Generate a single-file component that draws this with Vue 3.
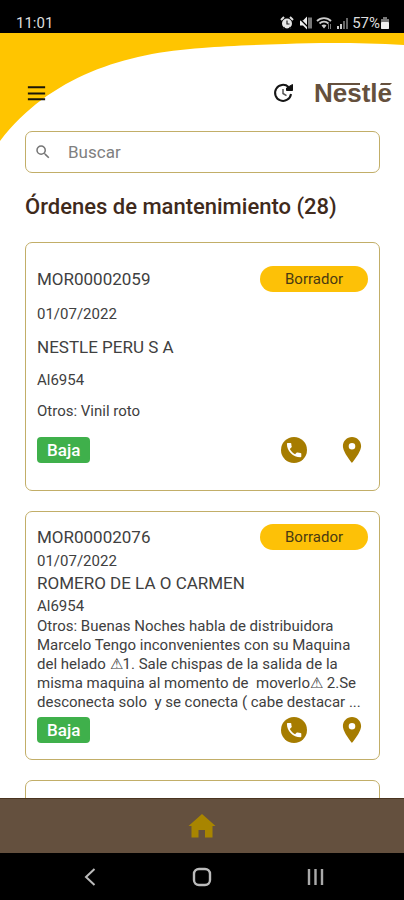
<script setup>
import { ref } from 'vue'

const query = ref('')
const total = 28

const orders = [
  {
    id: 'MOR00002059',
    date: '01/07/2022',
    client: 'NESTLE PERU S A',
    code: 'Al6954',
    detail: 'Otros: Vinil roto',
    status: 'Borrador',
    priority: 'Baja',
  },
  {
    id: 'MOR00002076',
    date: '01/07/2022',
    client: 'ROMERO DE LA O CARMEN',
    code: 'Al6954',
    detail:
      'Otros: Buenas Noches habla de distribuidora Marcelo Tengo inconvenientes con su Maquina del helado ⚠1. Sale chispas de la salida de la misma maquina al momento de  moverlo⚠ 2.Se desconecta solo  y se conecta ( cabe destacar ...',
    status: 'Borrador',
    priority: 'Baja',
  },
]
</script>

<template>
  <div class="screen">
    <div class="status-bar">
      <span class="clock">11:01</span>
      <div class="indicators">
        <svg class="ind" viewBox="0 0 14 14" aria-hidden="true">
          <path d="M1 4 4 1M13 4 10 1" stroke="#ddd" stroke-width="2" />
          <circle cx="7" cy="7.500" r="5" fill="#e6e6e6" />
          <path d="M7 4.500V8H9.500M3 13l1.500-2M11 13 9.500 11" stroke="#222" stroke-width="1.200" fill="none" />
        </svg>
        <svg class="ind" viewBox="0 0 14 14" aria-hidden="true">
          <path d="M2 4.500h3l4-4v13L5 9.500H2z" fill="#eee" />
          <path d="M1 2l11 11" stroke="#000" stroke-width="1.200" />
          <path d="M11 1.500v11M13 1.500v11" stroke="#aaa" stroke-width="1.400" />
        </svg>
        <svg class="ind wide" viewBox="0 0 16 14" aria-hidden="true">
          <path d="M1 5a10 10 0 0 1 14 0M3.500 7.500a6.500 6.500 0 0 1 9 0" stroke="#ccc" stroke-width="1.800" fill="none" />
          <path d="M5.500 9.500a4 4 0 0 1 5 0L8 12.500z" fill="#ccc" />
          <path d="M12.500 8v5M14.500 8v5" stroke="#777" />
        </svg>
        <svg class="ind signal" viewBox="0 0 12 14" aria-hidden="true">
          <path d="M2 10v3M5 8v5" stroke="#ccc" stroke-width="2" />
          <path d="M8 5v8M11 2v11" stroke="#666" stroke-width="2" />
        </svg>
        <span class="percent">57%</span>
        <svg class="battery" viewBox="0 0 10 14" aria-hidden="true">
          <path d="M3 1h4v2h2v10H1V3h2z" fill="#777" />
          <rect x="1" y="6" width="8" height="7" rx="1" fill="#eee" />
        </svg>
      </div>
    </div>

    <main class="content">
      <svg class="swoosh" viewBox="0 0 404 108" preserveAspectRatio="none" aria-hidden="true">
        <path d="M0 0H404V12C360 9.500 320 9.500 285 11C250 12 225 13 202 15C125 20 50 43 0 108Z" fill="#ffc500" />
      </svg>

      <header class="top">
        <button class="icon-btn" type="button" aria-label="Menú">
          <svg class="menu-icon" viewBox="0 0 24 24">
            <path d="M3 5.500h18M3 12h18M3 18h18" stroke="#1b1608" stroke-width="2.200" />
          </svg>
        </button>
        <div class="top-right">
          <button class="icon-btn" type="button" aria-label="Actualizar">
            <svg class="update-icon" viewBox="0 0 24 24">
              <path d="M17.500 6A8 8 0 1 0 20 13" stroke="#161616" stroke-width="2" fill="none" />
              <path d="M21.500 3.500V9.500H15.500V7z" fill="#111" stroke="#111" stroke-width="1" stroke-linejoin="round" />
              <path d="M12 8v4.500l3.500 2.200" stroke="#555" stroke-width="1.500" fill="none" />
            </svg>
          </button>
          <svg class="logo" viewBox="0 0 84 28" role="img" aria-label="Nestlé">
            <text x="1" y="23" class="logo-text">Nestle</text>
            <path d="M15 4H47V6H15zM68 4H79L77 6H67z" fill="#65503d" />
          </svg>
        </div>
      </header>

      <label class="search">
        <svg class="search-icon" viewBox="0 0 24 24" aria-hidden="true">
          <path
            d="M15.500 14h-.79l-.28-.27A6.470 6.470 0 0 0 16 9.500 6.500 6.500 0 1 0 9.500 16c1.610 0 3.090-.59 4.230-1.570l.27.28v.79l5 4.990L20.490 19l-4.990-5zm-6 0C7.010 14 5 11.990 5 9.500S7.010 5 9.500 5 14 7.010 14 9.500 11.990 14 9.500 14z"
            fill="#757575"
          />
        </svg>
        <input v-model="query" class="search-input" type="text" placeholder="Buscar" aria-label="Buscar" />
      </label>

      <h1 class="title">Órdenes de mantenimiento ({{ total }})</h1>

      <div class="list">
        <article v-for="order in orders" :key="order.id" class="card">
          <div class="row">
            <span class="strong">{{ order.id }}</span>
            <span class="pill">{{ order.status }}</span>
          </div>
          <p class="small">{{ order.date }}</p>
          <p class="strong">{{ order.client }}</p>
          <p class="small">{{ order.code }}</p>
          <p class="detail">{{ order.detail }}</p>
          <div class="row foot">
            <span class="tag">{{ order.priority }}</span>
            <div class="actions">
              <button class="icon-btn" type="button" aria-label="Llamar">
                <svg class="action-icon" viewBox="0 0 26 26">
                  <circle cx="13" cy="13" r="13" fill="#a67c00" />
                  <path
                    transform="translate(3.500 3.500) scale(.8)"
                    d="M20 15.500c-1.200 0-2.500-.2-3.600-.6-.3-.1-.7 0-1 .2l-2.200 2.200c-2.800-1.400-5.100-3.800-6.600-6.600l2.200-2.200c.3-.3.400-.7.200-1-.3-1.100-.5-2.300-.5-3.500 0-.6-.4-1-1-1H4c-.6 0-1 .4-1 1 0 9.400 7.600 17 17 17 .6 0 1-.4 1-1v-3.500c0-.6-.4-1-1-1z"
                    fill="#fff"
                  />
                </svg>
              </button>
              <button class="icon-btn" type="button" aria-label="Ubicación">
                <svg class="action-icon" viewBox="0 0 26 26">
                  <path
                    fill-rule="evenodd"
                    d="M13 0C7.900 0 3.900 4 3.900 9.100 3.900 15.500 13 26 13 26S22.100 15.500 22.100 9.100C22.100 4 18.100 0 13 0zM13 6a3.300 3.300 0 1 1 0 6.600A3.300 3.300 0 0 1 13 6z"
                    fill="#a67c00"
                  />
                </svg>
              </button>
            </div>
          </div>
        </article>
        <article class="card"></article>
      </div>
    </main>

    <nav class="tab-bar">
      <a class="home-link" href="#" aria-label="Inicio">
        <svg class="home-icon" viewBox="0 0 28 24">
          <path d="M14 0 .5 12H3.500V23.500H10.500V16H17V23.500H24.500V12H27.500L22.500 7.500z" fill="#a88500" />
        </svg>
      </a>
    </nav>

    <div class="system-nav">
      <button class="icon-btn" type="button" aria-label="Atrás">
        <svg class="sys-icon" viewBox="0 0 20 20">
          <path d="M15.500 2 7 10l8.500 8" stroke="#bbb" stroke-width="2" fill="none" />
        </svg>
      </button>
      <button class="icon-btn" type="button" aria-label="Inicio del sistema">
        <svg class="sys-icon" viewBox="0 0 20 20">
          <rect x="2" y="2" width="16" height="16" rx="5" stroke="#bbb" stroke-width="2.400" fill="none" />
        </svg>
      </button>
      <button class="icon-btn" type="button" aria-label="Recientes">
        <svg class="sys-icon" viewBox="0 0 20 20">
          <path d="M4 2v16M10.500 2v16M17 2v16" stroke="#aaa" stroke-width="2.400" />
        </svg>
      </button>
    </div>
  </div>
</template>

<style>
body {
  margin: 0;
}
</style>

<style scoped>
.screen {
  display: flex;
  flex-direction: column;
  height: 100vh;
  overflow: hidden;
  background: #fff;
  font-family: Roboto, 'Liberation Sans', sans-serif;
  color: #404040;
}

.status-bar {
  display: flex;
  flex: none;
  align-items: center;
  justify-content: space-between;
  box-sizing: border-box;
  height: 33px;
  padding: 12px 14px 0 16px;
  background: #000;
  color: #ddd;
  font-size: 15px;
}

.indicators {
  display: flex;
  align-items: center;
  gap: 4px;
}

.ind {
  width: 14px;
  height: 14px;
}

.ind.wide {
  width: 16px;
}

.ind.signal {
  width: 12px;
}

.battery {
  width: 10px;
  height: 14px;
  margin-left: -4px;
}

.content {
  position: relative;
  flex: 1;
  min-height: 0;
  overflow: hidden;
  padding: 0 24px 0 25px;
}

.swoosh {
  position: absolute;
  top: 0;
  left: 0;
  width: 100%;
  height: 108px;
}

.top {
  position: relative;
  display: flex;
  align-items: center;
  justify-content: space-between;
  height: 40px;
  margin-right: -17px;
  padding: 40px 0 18px;
}

.top-right {
  display: flex;
  align-items: center;
  gap: 18px;
}

.icon-btn {
  display: flex;
  padding: 0;
  border: 0;
  background: none;
}

.menu-icon {
  width: 23px;
  height: 23px;
}

.update-icon {
  width: 24px;
  height: 24px;
}

.logo {
  width: 84px;
  height: 28px;
}

.logo-text {
  font-family: 'Liberation Sans', sans-serif;
  font-size: 26px;
  font-weight: 700;
  fill: #65503d;
}

.search {
  position: relative;
  display: flex;
  align-items: center;
  gap: 16px;
  box-sizing: border-box;
  height: 42px;
  padding: 0 8px;
  border: 1px solid #c2ae68;
  border-radius: 7px;
  background: #fff;
}

.search-icon {
  width: 18px;
  height: 18px;
}

.search-input {
  flex: 1;
  min-width: 0;
  padding: 0;
  border: 0;
  outline: 0;
  background: none;
  color: #404040;
  font-family: inherit;
  font-size: 17px;
}

.search-input::placeholder {
  color: #808080;
  opacity: 1;
}

.title {
  margin: 0;
  padding: 21px 0 22px;
  color: #402a1c;
  font-size: 22px;
  font-weight: 500;
  line-height: 26px;
}

.list {
  display: flex;
  flex-direction: column;
  gap: 20px;
}

.card {
  display: flex;
  flex-direction: column;
  justify-content: space-evenly;
  box-sizing: border-box;
  min-height: 249px;
  padding: 12px 11px 16px;
  border: 1px solid #c2ae68;
  border-radius: 7px;
}

.card p {
  margin: 0;
}

.row {
  display: flex;
  align-items: center;
  justify-content: space-between;
  height: 26px;
}

.strong {
  font-size: 17px;
  line-height: 24px;
}

.card .small {
  font-size: 15px;
  line-height: 20px;
}

.card .detail {
  padding-top: 1px;
  font-size: 15px;
  line-height: 19px;
  white-space: pre-wrap;
}

.pill {
  width: 108px;
  border-radius: 13px;
  background: #fdc107;
  color: #4a3a12;
  font-size: 15px;
  line-height: 26px;
  text-align: center;
}

.foot {
  padding-top: 4px;
}

.tag {
  padding: 0 10px;
  border-radius: 4px;
  background: #3fb04b;
  color: #fff;
  font-size: 17px;
  font-weight: 500;
  line-height: 26px;
}

.actions {
  display: flex;
  gap: 32px;
  padding-right: 3px;
}

.action-icon {
  width: 26px;
  height: 26px;
}

.tab-bar {
  display: flex;
  flex: none;
  align-items: center;
  justify-content: center;
  box-sizing: border-box;
  height: 55px;
  border-top: 1px solid #4a3420;
  background: #64503e;
}

.home-link {
  display: flex;
}

.home-icon {
  width: 28px;
  height: 24px;
}

.system-nav {
  display: flex;
  flex: none;
  align-items: center;
  justify-content: space-around;
  height: 47px;
  padding: 0 33px;
  background: #000;
}

.sys-icon {
  width: 20px;
  height: 20px;
}
</style>
